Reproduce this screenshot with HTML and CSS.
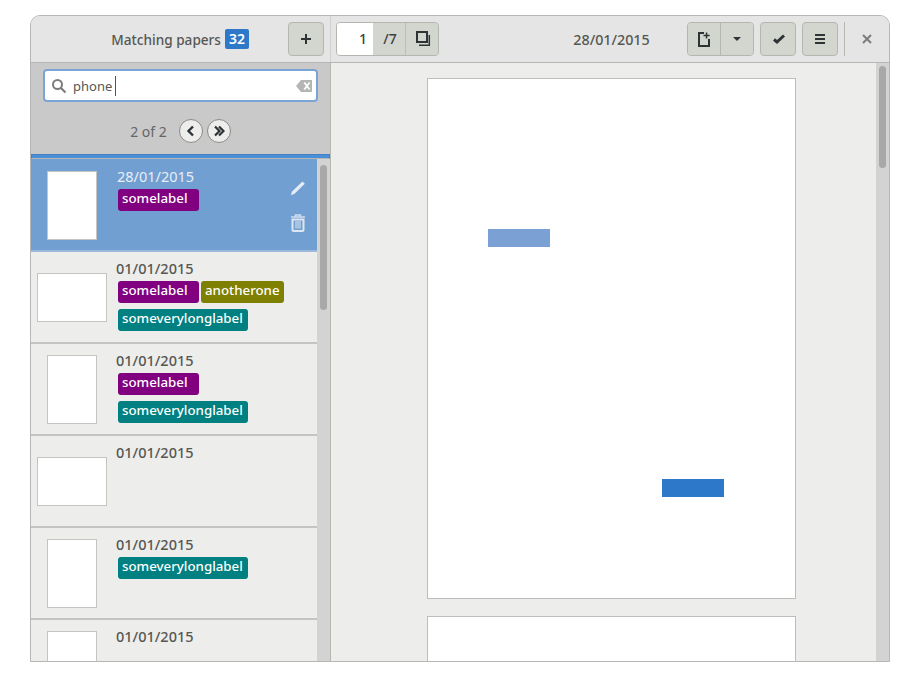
FILE: index.html
```html
<!DOCTYPE html>
<html lang="en">
<head>
<meta charset="utf-8">
<title>Paperwork</title>
<link rel="stylesheet" href="styles.css">
</head>
<body>
<div class="window">
  <header class="titlebar">
    <div class="bar-left">
      <div class="title"><span>Matching papers</span><span class="count">32</span></div>
      <button class="btn btn-add"><svg width="16" height="16" viewBox="0 0 16 16"><path d="M7 3h2v4h4v2H9v4H7V9H3V7h4z" fill="#2e3436"/></svg></button>
    </div>
    <div class="bar-right">
      <div class="spin">
        <div class="spin-input">1</div>
        <div class="spin-total">/7</div>
        <button class="spin-btn"><svg width="18" height="16" viewBox="0 0 18 16"><path d="M4 1h10v10H4z" fill="none" stroke="#2e3436" stroke-width="2"/><path d="M16.300 4v10.300H6" fill="none" stroke="#2e3436" stroke-width="1.500"/></svg></button>
      </div>
      <div class="doc-date">28/01/2015</div>
      <div class="actions">
        <div class="linked">
          <button class="btn-link btn-new"><svg width="16" height="16" viewBox="0 0 16 16"><path d="M8 2H3v13h10V8" fill="none" stroke="#2e3436" stroke-width="2"/><path d="M9.800 1.500h1.500v2.300h2.300v1.500h-2.300v2.300H9.800V5.300H7.500V3.800h2.300z" fill="#2e3436"/></svg></button>
          <button class="btn-link btn-drop"><svg width="8" height="4" viewBox="0 0 8 4"><path d="M0 0h8L4 4z" fill="#2e3436"/></svg></button>
        </div>
        <button class="btn btn-gap"><svg width="16" height="16" viewBox="0 0 16 16"><path d="M4 8.500 7 11l7-6.500" fill="none" stroke="#2e3436" stroke-width="3"/></svg></button>
        <button class="btn btn-gap"><svg width="16" height="16" viewBox="0 0 16 16"><path d="M3 3h10v2H3zM3 7h10v2H3zM3 11h10v2H3z" fill="#2e3436"/></svg></button>
        <div class="sep"></div>
        <button class="close"><svg width="10" height="10" viewBox="0 0 10 10"><path d="M1 1l8 8M9 1l-8 8" stroke="#7b7d7d" stroke-width="2"/></svg></button>
      </div>
    </div>
  </header>
  <div class="body">
    <aside class="sidebar">
      <div class="search">
        <div class="entry">
          <svg class="mag" width="16" height="16" viewBox="0 0 16 16"><circle cx="6.500" cy="6.500" r="4.500" fill="none" stroke="#7b7d7d" stroke-width="2"/><path d="M10 10l4.500 4.500" stroke="#7b7d7d" stroke-width="2.200"/></svg>
          <span class="query">phone</span><span class="caret"></span>
          <svg class="clear" width="16" height="12" viewBox="0 0 16 12"><path fill-rule="evenodd" d="M5 0h11v12H5L0 6zM7.500 3 10 6 7.500 9 9 10l2-2.500L13 10l1.200-1L12 6l2.200-3L13 2l-2 2.500L9 2z" fill="#b5b5b3"/></svg>
        </div>
        <div class="pager">
          <span class="pager-text">2 of 2</span>
          <button class="round"><svg width="12" height="12" viewBox="0 0 12 12"><path d="M8 1.500 3.500 6 8 10.500" fill="none" stroke="#2e3436" stroke-width="2.400"/></svg></button>
          <button class="round"><svg width="12" height="12" viewBox="0 0 12 12"><path d="M2 1.500 6.500 6 2 10.500M6 1.500 10.500 6 6 10.500" fill="none" stroke="#2e3436" stroke-width="2.200"/></svg></button>
        </div>
      </div>
      <div class="progress"></div>
      <div class="list-wrap">
        <div class="list">
          <div class="row row-selected">
            <div class="thumb-box"><div class="thumb thumb-p"></div></div>
            <div class="info">
              <div class="date">28/01/2015</div>
              <div class="labels"><span class="label purple wide">somelabel</span></div>
            </div>
            <div class="row-actions">
              <svg width="16" height="16" viewBox="0 0 16 16"><path d="M1 15l.8-3.200L12.500 1.500l2.300 2.200L4.300 14z" fill="#e6edf7"/></svg>
              <svg width="16" height="18" viewBox="0 0 16 18"><path d="M1 3h14M5.500 2.500V1h5v1.500" fill="none" stroke="#d0deef" stroke-width="1.500"/><path d="M2.500 5.500h11V16a1 1 0 0 1-1 1h-9a1 1 0 0 1-1-1z" fill="none" stroke="#dde7f3" stroke-width="2"/><path d="M5 7h6v7.500H5z" fill="#a9c3e3"/></svg>
            </div>
          </div>
          <div class="row">
            <div class="thumb-box thumb-box-l"><div class="thumb thumb-l"></div></div>
            <div class="info">
              <div class="date">01/01/2015</div>
              <div class="labels"><span class="label purple wide">somelabel</span><span class="label olive">anotherone</span><span class="label teal">someverylonglabel</span></div>
            </div>
          </div>
          <div class="row">
            <div class="thumb-box"><div class="thumb thumb-p"></div></div>
            <div class="info">
              <div class="date">01/01/2015</div>
              <div class="labels"><span class="label purple wide solo">somelabel</span><span class="label teal">someverylonglabel</span></div>
            </div>
          </div>
          <div class="row">
            <div class="thumb-box thumb-box-l"><div class="thumb thumb-l"></div></div>
            <div class="info"><div class="date">01/01/2015</div></div>
          </div>
          <div class="row">
            <div class="thumb-box"><div class="thumb thumb-p"></div></div>
            <div class="info">
              <div class="date">01/01/2015</div>
              <div class="labels"><span class="label teal">someverylonglabel</span></div>
            </div>
          </div>
          <div class="row">
            <div class="thumb-box"><div class="thumb thumb-p"></div></div>
            <div class="info"><div class="date">01/01/2015</div></div>
          </div>
        </div>
        <div class="scroll scroll-list"><div class="thumbbar thumbbar-list"></div></div>
      </div>
    </aside>
    <main class="viewer">
      <div class="pages">
        <div class="page page-first">
          <div class="hl hl-a"></div>
          <div class="hl hl-b"></div>
        </div>
        <div class="page page-second"></div>
      </div>
      <div class="scroll scroll-view"><div class="thumbbar thumbbar-view"></div></div>
    </main>
  </div>
</div>
</body>
</html>
```
FILE: styles.css
```css
* { box-sizing: border-box; }
html, body { margin: 0; height: 100%; background: #fff; }
body { padding: 15px 30px; font-family: "Noto Sans", "Open Sans", sans-serif; color: #2e3436; }
button { font: inherit; padding: 0; margin: 0; display: flex; align-items: center; justify-content: center; }
.window { width: 860px; height: 647px; border: 1px solid #b6b6b3; border-radius: 10px 10px 0 0; overflow: hidden; display: flex; flex-direction: column; background: #ededec; }
.titlebar { height: 47px; flex: none; display: flex; background: #e5e5e5; border-bottom: 1px solid #b6b6b3; }
.bar-left { width: 300px; flex: none; display: flex; align-items: center; padding: 0 6px 0 0; border-right: 1px solid #cfcfcd; }
.title { flex: 1; display: flex; align-items: center; justify-content: flex-end; gap: 4px; padding-right: 39px; font-size: 13.600px; font-weight: 500; color: #555753; }
.count { background: #2e78c9; color: #fff; border-radius: 2px; padding: 0 4px; height: 20px; line-height: 20px; font-size: 14px; font-weight: 600; }
.btn { width: 36px; height: 34px; background: #d3d6cf; border: 1px solid #b4b6b0; border-radius: 4px; }
.bar-right { flex: 1; display: flex; align-items: center; padding-left: 5px; }
.spin { display: flex; width: 103px; height: 34px; border: 1px solid #b4b6b0; border-radius: 4px; overflow: hidden; background: #d3d6cf; }
.spin-input { width: 36px; background: #fff; text-align: right; padding-right: 6px; font-size: 14px; font-weight: 500; line-height: 31px; color: #3a3f40; }
.spin-total { width: 33px; padding-left: 2px; text-align: center; font-size: 14px; font-weight: 500; line-height: 31px; color: #3a3f40; border-right: 1px solid #bcbeb8; }
.spin-btn { flex: 1; border: 0; background: #d3d6cf; }
.doc-date { width: 248px; padding-left: 97px; text-align: center; font-size: 14.300px; font-weight: 500; color: #555753; }
.actions { display: flex; align-items: center; }
.linked { display: flex; width: 67px; height: 34px; border: 1px solid #b4b6b0; border-radius: 4px; overflow: hidden; background: #d3d6cf; }
.btn-link { border: 0; background: #d3d6cf; }
.btn-new { width: 33px; border-right: 1px solid #b4b6b0; }
.btn-drop { flex: 1; }
.btn-gap { margin-left: 6px; }
.sep { width: 1px; height: 34px; background: #b6b6b3; margin-left: 6px; }
.close { width: 44px; height: 34px; border: 0; background: transparent; }
.body { flex: 1; display: flex; min-height: 0; }
.sidebar { width: 300px; flex: none; display: flex; flex-direction: column; border-right: 1px solid #b6b6b3; }
.search { height: 91px; flex: none; background: #c9c9c9; padding: 6px 12px 0 12px; }
.entry { height: 33px; display: flex; align-items: center; background: #fff; border: 2px solid #7ba4d6; border-radius: 4px; padding: 0 4px 0 6px; font-size: 13px; color: #555753; }
.mag { flex: none; }
.query { margin-left: 6px; }
.caret { width: 1px; height: 20px; background: #555; margin-left: 3px; }
.clear { margin-left: auto; }
.pager { display: flex; align-items: center; justify-content: center; gap: 4px; margin-top: 17px; font-size: 14px; color: #666; }
.pager-text { margin-right: 8px; }
.round { width: 24px; height: 24px; border: 1px solid #888a85; border-radius: 50%; background: #ededec; }
.progress { height: 5px; flex: none; background: #4a90d9; border: 1px solid #4a7fc0; border-bottom-color: #b6b6b3; }
.list-wrap { flex: 1; min-height: 0; display: flex; overflow: hidden; }
.list { flex: 1; min-width: 0; }
.row { height: 92px; display: flex; background: #ededec; border-bottom: 2px solid #c4c4c1; }
.row-selected { height: 93px; background: #729fd1; border-bottom-color: #9cb9d9; color: #fff; }
.thumb-box { width: 85px; flex: none; display: flex; padding: 11px 0 0 16px; }
.thumb-box-l { padding: 21px 0 0 6px; }
.row-selected .thumb-box { padding-top: 12px; }
.thumb { background: #fff; border: 1px solid #c4c4c1; flex: none; }
.thumb-p { width: 50px; height: 69px; }
.thumb-l { width: 70px; height: 49px; }
.info { flex: 1; min-width: 0; padding-top: 7px; }
.row-selected .info { padding: 8px 0 0 1px; }
.date { font-size: 14.500px; font-weight: 500; line-height: 19px; color: #555753; }
.row-selected .date { color: #e7eef7; font-weight: 400; }
.labels { display: flex; flex-wrap: wrap; gap: 6px 2px; margin-top: 3px; padding-left: 2px; }
.row-selected .labels { padding-left: 1px; }
.label { height: 22px; line-height: 19px; padding: 0 4px; border-radius: 3px; color: #fff; font-size: 13.300px; font-weight: 500; }
.wide { width: 81px; }
.solo { margin-right: 40px; }
.purple { background: #800080; }
.olive { background: #808000; }
.teal { background: #008080; padding-right: 5px; }
.row-actions { width: 38px; flex: none; display: flex; flex-direction: column; align-items: center; gap: 18px; padding-top: 21px; }
.scroll { width: 13px; flex: none; background: #d3d3d3; padding: 6px 3px 0; }
.thumbbar { width: 7px; background: #a8a8a8; border-radius: 4px; }
.thumbbar-list { height: 145px; }
.viewer { flex: 1; min-width: 0; display: flex; overflow: hidden; }
.pages { flex: 1; padding: 15px 0 0 96px; overflow: hidden; }
.page { width: 369px; background: #fff; border: 1px solid #bdbdbb; }
.page-first { height: 521px; position: relative; }
.page-second { height: 200px; margin-top: 17px; }
.hl { position: absolute; width: 62px; height: 18px; }
.hl-a { left: 60px; top: 150px; background: #7ba1d4; }
.hl-b { left: 234px; top: 400px; background: #2e78c9; }
.scroll-view { padding-top: 3px; }
.thumbbar-view { height: 102px; }
```
